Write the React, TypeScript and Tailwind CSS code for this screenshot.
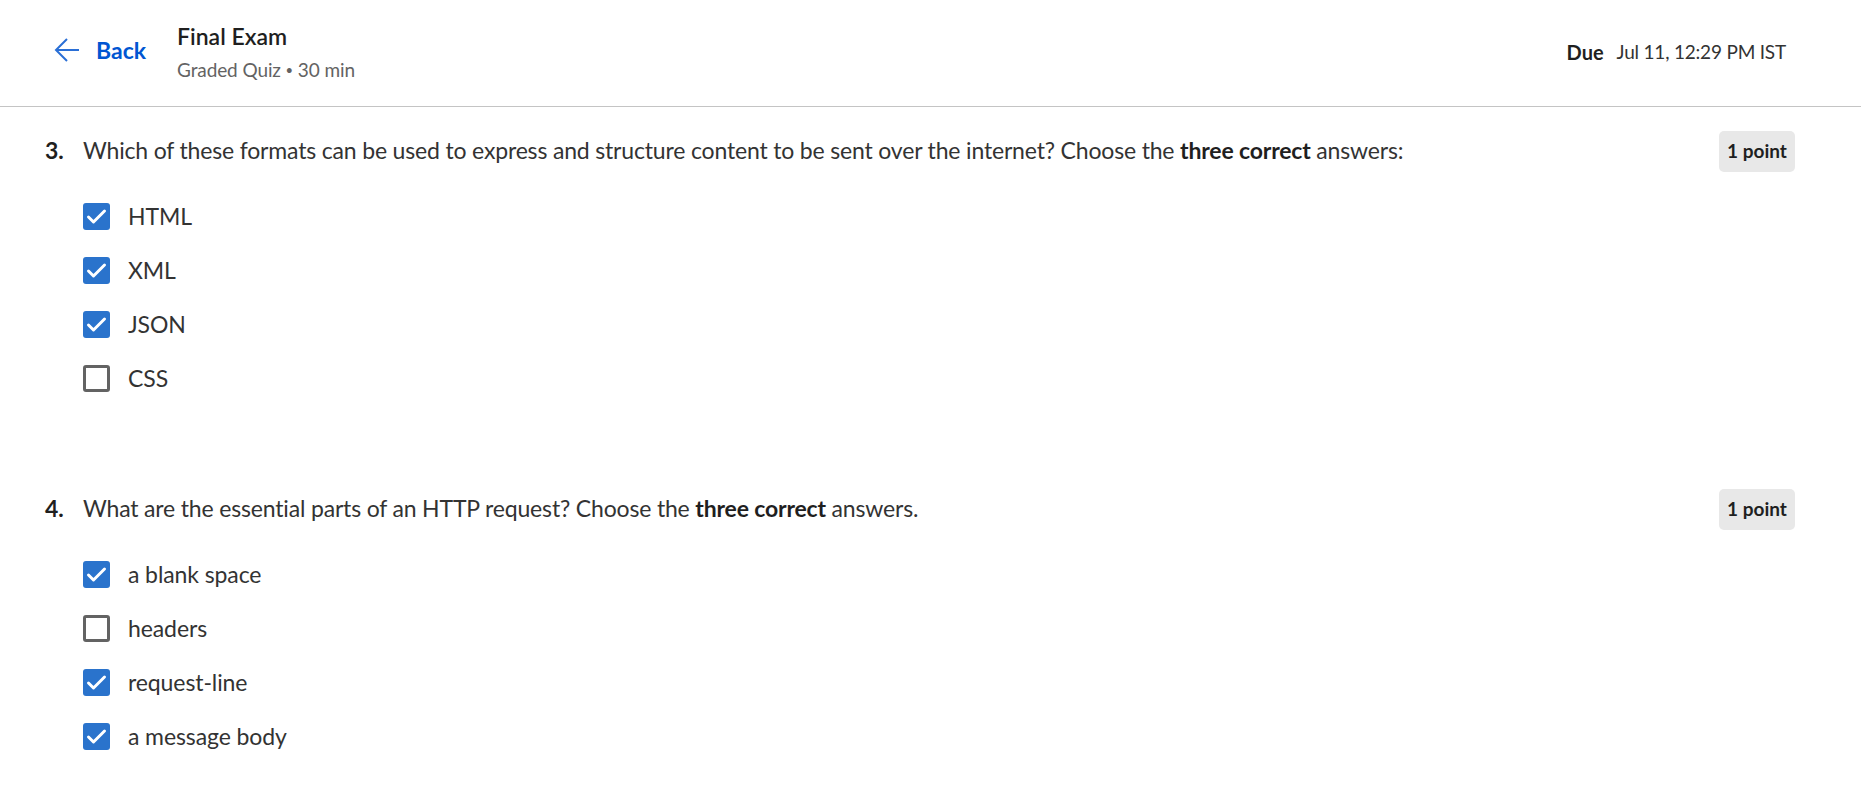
import React from "react";

const font = { fontFamily: "Lato, 'Noto Sans', sans-serif" };

function Box({ checked }: { checked: boolean }) {
  if (checked) {
    return (
      <div className="w-[27px] h-[27px] rounded-[3px] bg-[#2a73cc] shrink-0">
        <svg width="27" height="27" viewBox="0 0 27 27" fill="none">
          <path d="M5.5 14 L10.5 19 L21.5 8" stroke="white" strokeWidth="3" strokeLinecap="round" strokeLinejoin="round" />
        </svg>
      </div>
    );
  }
  return <div className="w-[27px] h-[27px] rounded-[3px] border-[3px] border-[#636363] bg-white shrink-0" />;
}

function Option({ label, checked }: { label: string; checked: boolean }) {
  return (
    <div className="h-[54px] flex items-center gap-[18px] pl-[83px]">
      <Box checked={checked} />
      <span className="text-[23px] text-[#333333] tracking-[-0.1px]">{label}</span>
    </div>
  );
}

function Question({
  num,
  children,
  options,
}: {
  num: string;
  children: React.ReactNode;
  options: { label: string; checked: boolean }[];
}) {
  return (
    <div>
      <div className="flex items-start justify-between pl-[45px] pr-[66px]">
        <div className="flex items-center h-[38px] text-[23px] text-[#333333]">
          <span className="font-bold text-[#1f1f1f] w-[38px]">{num}</span>
          <span className="tracking-[-0.17px]">{children}</span>
        </div>
        <div className="h-[41px] w-[76px] rounded-[5px] bg-[#e8e8e8] flex items-center justify-center text-[19px] font-bold text-[#1f1f1f]">
          1 point
        </div>
      </div>
      <div className="mt-[17px]">
        {options.map((o) => (
          <Option key={o.label} label={o.label} checked={o.checked} />
        ))}
      </div>
    </div>
  );
}

export default function App() {
  return (
    <div className="w-[1861px] h-[795px] bg-white overflow-hidden" style={font}>
      <header className="h-[107px] border-b border-[#c4c4c4] flex items-start justify-between pl-[54px] pr-[75px]">
        <div className="flex items-start">
          <div className="flex items-center h-[100px] gap-[16px]">
            <svg width="26" height="26" viewBox="0 0 26 26" fill="none">
              <path d="M25 13 H2 M13 2 L2 13 L13 24" stroke="#2a6fd6" strokeWidth="2" strokeLinejoin="miter" />
            </svg>
            <span className="text-[23px] font-bold text-[#0056d2]">Back</span>
          </div>
          <div className="ml-[31px] pt-[20px]">
            <div className="text-[23px] text-[#1f1f1f] leading-[32px] font-semibold">Final Exam</div>
            <div className="text-[19px] text-[#636363] leading-[32px] mt-[2px] tracking-[-0.1px]">
              Graded Quiz <span className="text-[13px] align-[2px]">•</span> 30 min
            </div>
          </div>
        </div>
        <div className="h-[104px] flex items-center gap-[13px]">
          <span className="text-[20px] font-bold text-[#1f1f1f]">Due</span>
          <span className="text-[19px] text-[#333333] tracking-[-0.2px]">Jul 11, 12:29 PM IST</span>
        </div>
      </header>
      <main className="pt-[24px]">
        <Question
          num="3."
          options={[
            { label: "HTML", checked: true },
            { label: "XML", checked: true },
            { label: "JSON", checked: true },
            { label: "CSS", checked: false },
          ]}
        >
          Which of these formats can be used to express and structure content to be sent over the internet? Choose the{" "}
          <b className="text-[#1f1f1f]">three correct</b> answers:
        </Question>
        <div className="h-[84px]" />
        <Question
          num="4."
          options={[
            { label: "a blank space", checked: true },
            { label: "headers", checked: false },
            { label: "request-line", checked: true },
            { label: "a message body", checked: true },
          ]}
        >
          What are the essential parts of an HTTP request? Choose the <b className="text-[#1f1f1f]">three correct</b>{" "}
          answers.
        </Question>
      </main>
    </div>
  );
}
